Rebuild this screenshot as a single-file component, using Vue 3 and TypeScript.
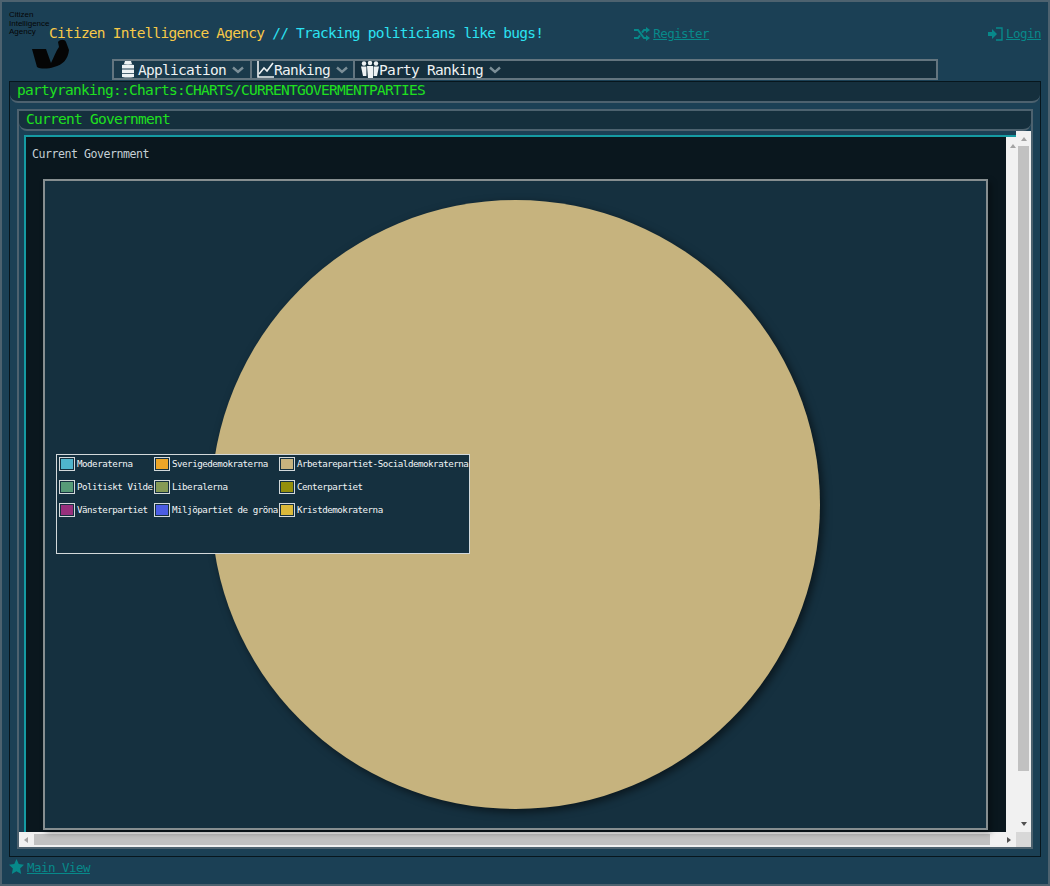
<script setup lang="ts">
interface LegendItem {
  name: string;
  color: string;
}

const legend: LegendItem[] = [
  { name: 'Moderaterna', color: '#4fb5cc' },
  { name: 'Sverigedemokraterna', color: '#eda628' },
  { name: 'Arbetarepartiet-Socialdemokraterna', color: '#c6b37e' },
  { name: 'Politiskt Vilde', color: '#579b78' },
  { name: 'Liberalerna', color: '#869a55' },
  { name: 'Centerpartiet', color: '#948f0c' },
  { name: 'Vänsterpartiet', color: '#97307c' },
  { name: 'Miljöpartiet de gröna', color: '#4b5de4' },
  { name: 'Kristdemokraterna', color: '#dab93a' },
];
</script>

<template>
  <div class="page">
    <header class="top">
      <svg class="logo" width="62" height="62" viewBox="0 0 62 62">
        <text x="0" y="7.5" class="logo-text">Citizen</text>
        <text x="0" y="16.5" class="logo-text">Intelligence</text>
        <text x="0" y="25" class="logo-text">Agency</text>
        <path
          d="M23 40 L37 40 L42 54 C45 48 47 42 50 38 L49 33 C51 30 56 30 57 33 L60 41 C59 50 54 56 45 58 C39 60 31 60 28 58 Z"
          fill="#050505"
        />
      </svg>
      <h1 class="title">
        <span class="title-name">Citizen Intelligence Agency</span>
        <span class="title-tag"> // Tracking politicians like bugs!</span>
      </h1>
      <a class="link register">
        <svg width="16" height="14" viewBox="0 0 16 14" fill="none" stroke="currentColor" stroke-width="2">
          <path d="M0 3 H4 L10 11 H13 M0 11 H4 L6 8.4 M8 5.6 L10 3 H13" />
          <path d="M12 0 L16 3 L12 6 Z M12 8 L16 11 L12 14 Z" fill="currentColor" stroke="none" />
        </svg>
        <span>Register</span>
      </a>
      <a class="link login">
        <svg width="15" height="14" viewBox="0 0 15 14" fill="none" stroke="currentColor" stroke-width="1.4">
          <path d="M8 1 H14 V13 H8" />
          <path d="M0 5 H4 V2 L9 7 L4 12 V9 H0 Z" fill="currentColor" stroke="none" />
        </svg>
        <span>Login</span>
      </a>
    </header>

    <nav class="menu">
      <div class="menu-item first">
        <svg width="12" height="17" viewBox="0 0 12 17" fill="#eef2f3">
          <path d="M3 0 H9 L10 3 H2 Z" />
          <path d="M0 4 Q6 2.4 12 4 V7.6 H0 Z M0 8.4 H12 V12 H0 Z M0 12.8 H12 V16 Q6 17 0 16 Z" />
        </svg>
        <span class="menu-text">Application</span>
        <svg class="chevron" width="12" height="8" viewBox="0 0 12 8" fill="none" stroke="currentColor" stroke-width="2.4">
          <path d="M1 1.5 L6 6 L11 1.5" />
        </svg>
      </div>
      <div class="menu-item second">
        <svg width="17" height="17" viewBox="0 0 17 17" fill="none" stroke="#eef2f3" stroke-width="1.6">
          <path d="M1 0 V16 H17" />
          <path d="M2 13 L7 7 L10 10 L16 2" />
        </svg>
        <span class="menu-text">Ranking</span>
        <svg class="chevron" width="12" height="8" viewBox="0 0 12 8" fill="none" stroke="currentColor" stroke-width="2.4">
          <path d="M1 1.5 L6 6 L11 1.5" />
        </svg>
      </div>
      <div class="menu-item third">
        <svg width="18" height="17" viewBox="0 0 18 17" fill="#eef2f3">
          <circle cx="3" cy="2.5" r="2.2" />
          <circle cx="9" cy="2" r="2.2" />
          <circle cx="15" cy="2.5" r="2.2" />
          <path d="M0 5.5 H5.4 V15 H2 Z M6 5 H12 V17 H7 Z M12.6 5.5 H18 L16 15 H12.6 Z" />
        </svg>
        <span class="menu-text">Party Ranking</span>
        <svg class="chevron" width="12" height="8" viewBox="0 0 12 8" fill="none" stroke="currentColor" stroke-width="2.4">
          <path d="M1 1.5 L6 6 L11 1.5" />
        </svg>
      </div>
    </nav>

    <main class="panel">
      <div class="panel-bar">partyranking::Charts:CHARTS/CURRENTGOVERMENTPARTIES</div>
      <section class="frame">
        <div class="panel-bar frame-bar">Current Government</div>
        <div class="scroll">
          <div class="viewport">
            <div class="teal">
              <div class="dark">
                <div class="chart-title">Current Government</div>
                <div class="chart">
                  <svg class="pie" width="941" height="647" viewBox="0 0 941 647">
                    <circle cx="470.5" cy="323.5" r="304.5" fill="#c6b37e" />
                  </svg>
                  <div class="legend">
                    <div v-for="item in legend" :key="item.name" class="legend-item">
                      <span class="swatch"><i :style="{ background: item.color }"></i></span>
                      <span class="legend-name">{{ item.name }}</span>
                    </div>
                  </div>
                </div>
              </div>
              <div class="bar-inner"><span class="arrow up"></span></div>
            </div>
          </div>
          <div class="bar-v">
            <span class="arrow up"></span>
            <div class="thumb-v"></div>
            <span class="arrow down"></span>
          </div>
          <div class="bar-h">
            <span class="arrow left"></span>
            <div class="thumb-h"></div>
            <span class="arrow right"></span>
          </div>
          <div class="corner"></div>
        </div>
      </section>
    </main>

    <footer class="foot">
      <a class="link">
        <svg width="15" height="15" viewBox="0 0 24 24" fill="currentColor">
          <path d="M12 0 L15.6 8 L24 9 L17.8 15 L19.5 24 L12 19.5 L4.5 24 L6.2 15 L0 9 L8.4 8 Z" />
        </svg>
        <span>Main View</span>
      </a>
    </footer>
  </div>
</template>

<style>
html,
body {
  margin: 0;
  background: #1b4055;
}
</style>

<style scoped>
.page {
  box-sizing: border-box;
  width: 1050px;
  height: 886px;
  border: 2px solid #4d626f;
  background: #1b4055;
  font-family: 'DejaVu Sans Mono', 'Liberation Mono', monospace;
  overflow: hidden;
}

.top {
  display: flex;
  align-items: flex-start;
  height: 57px;
}

.logo {
  flex: none;
  margin: 7px -22px 0 7px;
  overflow: visible;
}

.logo-text {
  font-family: 'Liberation Sans', sans-serif;
  font-size: 8px;
  fill: #050505;
}

.title {
  margin: 21px 0 0;
  font-size: 14.5px;
  letter-spacing: -0.76px;
  font-weight: 400;
  line-height: 20px;
  white-space: pre;
}

.title-name {
  color: #f7c948;
}

.title-tag {
  color: #2be3f2;
}

.link {
  display: flex;
  align-items: center;
  gap: 3px;
  color: #07898a;
  font-size: 12.5px;
  letter-spacing: -0.53px;
  line-height: 16px;
}

.link span {
  text-decoration: underline;
}

.register {
  margin: 24px 0 0 91px;
}

.login {
  margin: 24px 7px 0 auto;
}

.menu {
  box-sizing: border-box;
  display: flex;
  width: 826px;
  height: 21px;
  margin-left: 110px;
  border: 2px solid #63757f;
  background: #152f3d;
}

.menu-item {
  display: flex;
  align-items: center;
  height: 17px;
  box-sizing: border-box;
  color: #eef2f3;
  font-size: 14.5px;
  letter-spacing: -0.72px;
  line-height: 17px;
}

.menu-item.first {
  width: 138px;
  padding-left: 8px;
  border-right: 2px solid #63757f;
  background: #1a3a4b;
}

.menu-item.second {
  width: 103px;
  padding-left: 5px;
  border-right: 2px solid #63757f;
  background: #1a3a4b;
}

.menu-item.third {
  padding-left: 6px;
}

.menu-text {
  position: relative;
  top: 1px;
}

.first .menu-text {
  margin-left: 4px;
}

.chevron {
  margin: 1px 0 0 6px;
  color: #7b8e97;
}

.panel {
  box-sizing: border-box;
  height: 776px;
  margin: 1px 7px 0;
  border: 1px solid #07161d;
}

.panel-bar {
  box-sizing: border-box;
  height: 21px;
  border-bottom: 2px solid #4d626f;
  border-radius: 0 0 8px 8px;
  background: #152f3d;
  color: #1fe01f;
  font-size: 14.5px;
  letter-spacing: -0.73px;
  line-height: 16px;
  padding-left: 7px;
}

.frame {
  box-sizing: border-box;
  height: 740px;
  margin: 6px 7px 0;
  border: 2px solid #4d626f;
}

.frame-bar {
  height: 20px;
}

.scroll {
  display: grid;
  grid-template-columns: 997px 15px;
  grid-template-rows: 701px 15px;
}

.viewport {
  box-sizing: border-box;
  padding: 4px 0 0 5px;
  background: #1b4055;
}

.teal {
  box-sizing: border-box;
  display: flex;
  height: 697px;
  border-top: 2px solid #159ba3;
  border-left: 2px solid #159ba3;
}

.dark {
  flex: none;
  box-sizing: border-box;
  width: 980px;
  height: 695px;
  padding: 10px 0 0 6px;
  background: #0a171e;
}

.chart-title {
  height: 32px;
  color: #c5d0d5;
  font-size: 11.6px;
  letter-spacing: -0.48px;
  line-height: 14px;
}

.chart {
  position: relative;
  box-sizing: border-box;
  width: 945px;
  height: 651px;
  margin-left: 11px;
  border: 2px solid #868e90;
  background: #15303f;
  box-shadow: 3px 3px 6px rgba(0, 0, 0, 0.35);
}

.pie {
  display: block;
  filter: drop-shadow(3px 3px 4px rgba(0, 0, 0, 0.55));
}

.legend {
  position: absolute;
  left: 11px;
  top: 273px;
  box-sizing: border-box;
  display: grid;
  grid-template-columns: 95px 125px 1fr;
  grid-auto-rows: 23px;
  width: 414px;
  height: 100px;
  padding: 2px 0 0 2px;
  border: 1px solid #d3d9db;
  background: #15303f;
  color: #f2f5f6;
  font-size: 9.2px;
  letter-spacing: -0.49px;
}

.legend-item {
  display: flex;
  align-items: flex-start;
  white-space: nowrap;
}

.legend-name {
  line-height: 14px;
  margin-left: 2px;
}

.swatch {
  box-sizing: border-box;
  flex: none;
  width: 16px;
  height: 14px;
  padding: 1px;
  border: 1px solid #d3d9db;
}

.swatch i {
  display: block;
  height: 100%;
}

.bar-inner {
  flex: none;
  width: 10px;
  height: 695px;
  padding-top: 7px;
  box-sizing: border-box;
  background: #f1f1f1;
}

.bar-inner .arrow {
  margin-left: 4px;
}

.bar-v {
  display: flex;
  flex-direction: column;
  box-sizing: border-box;
  padding: 6px 0;
  background: #f1f1f1;
  border-top: 0;
}

.bar-v .arrow.up {
  margin: 0 0 0 5px;
}

.thumb-v {
  width: 11px;
  height: 625px;
  margin: 5px 0 0 2px;
  background: #c1c1c1;
}

.bar-v .arrow.down {
  margin: auto 0 0 5px;
}

.bar-h {
  display: flex;
  align-items: center;
  height: 15px;
  background: #f1f1f1;
}

.bar-h .arrow.left {
  margin-left: 5px;
}

.thumb-h {
  width: 956px;
  height: 11px;
  margin-left: 6px;
  background: #c1c1c1;
}

.bar-h .arrow.right {
  margin-left: auto;
  margin-right: 5px;
}

.corner {
  background: #d8d8d8;
}

.arrow {
  display: block;
  width: 0;
  height: 0;
  border-style: solid;
  border-color: transparent;
}

.arrow.up {
  border-width: 0 3px 4px;
  border-bottom-color: #a3a3a3;
}

.arrow.down {
  border-width: 4px 3px 0;
  border-top-color: #505050;
}

.arrow.left {
  border-width: 3px 4px 3px 0;
  border-right-color: #a3a3a3;
}

.arrow.right {
  border-width: 3px 0 3px 4px;
  border-left-color: #505050;
}

.foot {
  padding: 3px 0 0 7px;
}

.foot svg {
  margin-top: -4px;
}
</style>
